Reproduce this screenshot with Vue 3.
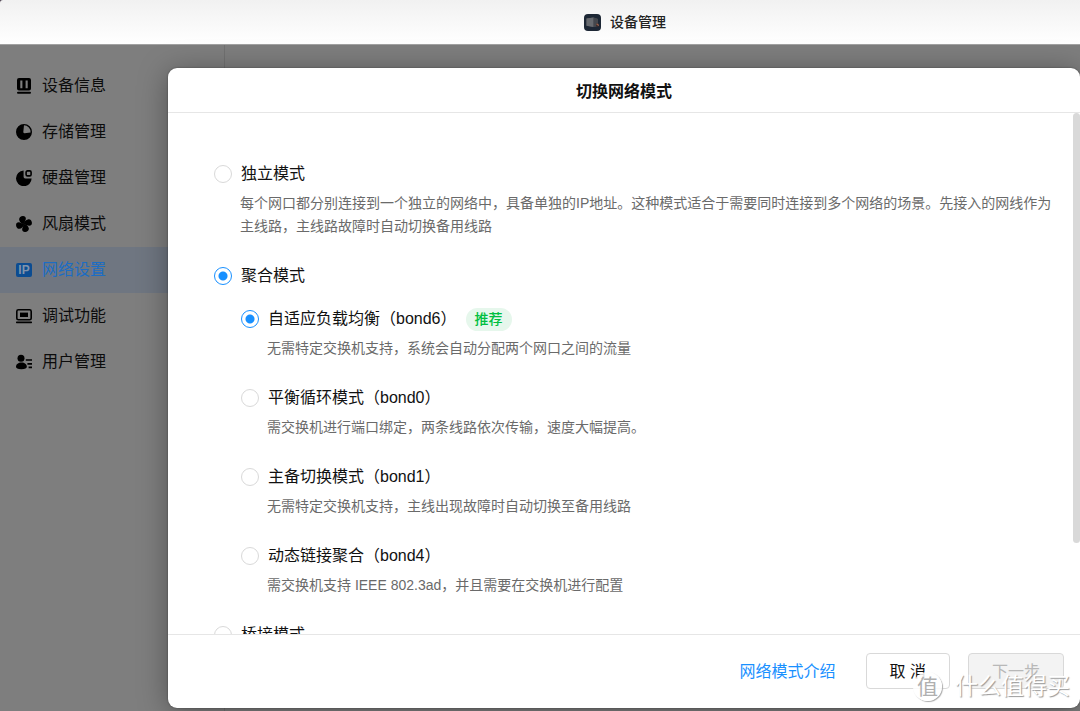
<script setup>
import { ref } from 'vue'

const menu = [
  { id: 'info', label: '设备信息' },
  { id: 'storage', label: '存储管理' },
  { id: 'disk', label: '硬盘管理' },
  { id: 'fan', label: '风扇模式' },
  { id: 'network', label: '网络设置' },
  { id: 'debug', label: '调试功能' },
  { id: 'user', label: '用户管理' }
]

const bonds = [
  { id: 'bond6', label: '自适应负载均衡（bond6）', desc: '无需特定交换机支持，系统会自动分配两个网口之间的流量', tag: '推荐' },
  { id: 'bond0', label: '平衡循环模式（bond0）', desc: '需交换机进行端口绑定，两条线路依次传输，速度大幅提高。' },
  { id: 'bond1', label: '主备切换模式（bond1）', desc: '无需特定交换机支持，主线出现故障时自动切换至备用线路' },
  { id: 'bond4', label: '动态链接聚合（bond4）', desc: '需交换机支持 IEEE 802.3ad，并且需要在交换机进行配置' }
]

const active = ref('network')
const mode = ref('aggregate')
const bond = ref('bond6')
</script>

<template>
  <div class="window">
    <header class="titlebar">
      <svg class="app-icon" viewBox="0 0 17 17" aria-hidden="true">
        <rect width="17" height="17" rx="4" fill="#1d2735" />
        <path d="M2.5 4.6 9.5 3.4 14 5v7l-4.5 1-7-1.2z" fill="#505359" />
        <path d="M2.5 4.6 9.5 3.4V13l-7-1.2z" fill="#686b70" />
        <path d="M9.5 3.4 14 5v7l-4.5 1z" fill="#44474d" />
        <rect x="12" y="9.6" width="3" height="3" rx=".6" fill="#3a2c2c" />
        <path d="M12.4 10.2h1.4v1h1.2" stroke="#c0785c" stroke-width=".8" fill="none" />
      </svg>
      <h1>设备管理</h1>
    </header>

    <div class="main">
      <nav class="sidebar">
        <button
          v-for="item in menu"
          :key="item.id"
          type="button"
          class="nav-item"
          :class="{ active: item.id === active }"
          @click="active = item.id"
        >
          <svg viewBox="0 0 16 16" aria-hidden="true">
            <template v-if="item.id === 'info'">
              <path fill-rule="evenodd" fill="currentColor" d="M3 0h10a2 2 0 0 1 2 2v8.500a2 2 0 0 1-2 2H3a2 2 0 0 1-2-2V2a2 2 0 0 1 2-2zM4.300 2.500v7.800h2.100V2.500zM9.600 2.500v7.800h2.100V2.500z" />
              <rect x="1" y="13.800" width="14" height="2" rx="1" fill="currentColor" />
            </template>
            <template v-else-if="item.id === 'storage'">
              <path fill-rule="evenodd" fill="currentColor" d="M8 0a8 8 0 1 1 0 16A8 8 0 0 1 8 0zM8 1.300 7.300 8a1.300 1.300 0 0 0 1.300 1.200l6-.7A6.700 6.700 0 0 0 8 1.300z" />
            </template>
            <template v-else-if="item.id === 'disk'">
              <path fill="currentColor" d="M7.600.6v6.200a1.600 1.600 0 0 0 1.600 1.600h6.400A7.800 7.800 0 1 1 7.600.6z" />
              <rect x="10.100" y=".9" width="5" height="5" rx="1.400" fill="none" stroke="currentColor" stroke-width="1.600" />
            </template>
            <template v-else-if="item.id === 'fan'">
              <g fill="currentColor" transform="rotate(-12 8 8)">
                <path
                  v-for="angle in [0, 90, 180, 270]"
                  :key="angle"
                  :transform="`rotate(${angle} 8 8)`"
                  d="M7.400 8C5.200 6.800 3.900 4.500 4.200 2.500 4.500.6 6.500-.3 8.500 0c2 .3 2.900 1.900 2.300 3.500C10.300 5 9 5.600 9 7.400z"
                />
              </g>
            </template>
            <template v-else-if="item.id === 'network'">
              <rect y="1" width="16" height="14" rx="2" fill="#0b4c92" />
              <text x="8" y="12" text-anchor="middle" class="ip">IP</text>
            </template>
            <template v-else-if="item.id === 'debug'">
              <rect x=".8" y="1.800" width="14.400" height="10" rx="1.600" fill="none" stroke="currentColor" stroke-width="1.600" />
              <rect x="4" y="4.600" width="8" height="4.400" fill="currentColor" />
              <rect y="13.600" width="16" height="1.600" rx=".6" fill="currentColor" />
            </template>
            <template v-else>
              <circle cx="5" cy="4.200" r="3.500" fill="currentColor" />
              <path fill="currentColor" d="M5.600 8.600c3 0 5.200 1.600 5.200 4.200 0 1.700-1.600 2.400-5.400 2.400S0 14.500 0 12.800c0-2.600 2.300-4.200 5.600-4.200z" />
              <path stroke="currentColor" stroke-width="1.700" d="M9.800 6H16M11.400 9.800H16M12.600 13.400H16" />
            </template>
          </svg>
          <span>{{ item.label }}</span>
        </button>
      </nav>
    </div>

    <section class="dialog" role="dialog" aria-labelledby="dialog-title">
      <header class="dialog-head">
        <h2 id="dialog-title">切换网络模式</h2>
      </header>

      <div class="dialog-body">
        <div class="option">
          <label class="row">
            <input v-model="mode" type="radio" name="mode" value="independent" />
            <span>独立模式</span>
          </label>
          <p>每个网口都分别连接到一个独立的网络中，具备单独的IP地址。这种模式适合于需要同时连接到多个网络的场景。先接入的网线作为主线路，主线路故障时自动切换备用线路</p>
        </div>

        <div class="option">
          <label class="row">
            <input v-model="mode" type="radio" name="mode" value="aggregate" />
            <span>聚合模式</span>
          </label>
          <div class="bonds">
            <div v-for="b in bonds" :key="b.id" class="option">
              <label class="row">
                <input v-model="bond" type="radio" name="bond" :value="b.id" />
                <span>{{ b.label }}</span>
                <em v-if="b.tag" class="tag">{{ b.tag }}</em>
              </label>
              <p>{{ b.desc }}</p>
            </div>
          </div>
        </div>

        <div class="option">
          <label class="row">
            <input v-model="mode" type="radio" name="mode" value="bridge" />
            <span>桥接模式</span>
          </label>
        </div>
        <div class="scroll-thumb"></div>
      </div>

      <footer class="dialog-foot">
        <a href="#">网络模式介绍</a>
        <div class="actions">
          <button type="button" class="btn cancel">取 消</button>
          <button type="button" class="btn next" disabled>下一步</button>
        </div>
      </footer>
    </section>

    <div class="watermark">
      <span class="seal">值</span>
      <span class="brand">什么值得买</span>
    </div>
  </div>
</template>

<style>
body {
  margin: 0;
  background: #4a3f4e;
}
</style>

<style scoped>
.window {
  position: relative;
  display: flex;
  flex-direction: column;
  height: 100vh;
  overflow: hidden;
  border-top-left-radius: 3px;
  font-family: "Liberation Sans", "Noto Sans CJK SC", sans-serif;
  font-size: 16px;
  line-height: 24px;
  color: #111;
}
button {
  font: inherit;
}
h1, h2, p {
  margin: 0;
}
.titlebar {
  display: flex;
  align-items: center;
  justify-content: center;
  gap: 9px;
  height: 44px;
  flex: none;
  padding-left: 170px;
  background: linear-gradient(#f1f1f1, #fff);
  border-bottom: 1px solid #a2a2a2;
}
.app-icon {
  width: 17px;
  height: 17px;
}
.titlebar h1 {
  font-size: 14px;
  font-weight: 500;
  color: #222;
}
.main {
  display: flex;
  flex: 1;
  background: #7e7e7e;
}
.sidebar {
  display: flex;
  flex-direction: column;
  width: 224px;
  padding-top: 18px;
  border-right: 1px solid #717171;
}
.nav-item {
  display: flex;
  align-items: center;
  gap: 10px;
  height: 46px;
  padding: 0 16px;
  border: 0;
  background: none;
  color: #0c0c0c;
  text-align: left;
}
.nav-item svg {
  width: 16px;
  height: 16px;
  color: #000;
}
.nav-item.active {
  background: #6f7681;
  color: #1c6dc4;
}
.ip {
  font-size: 12px;
  font-weight: 700;
  fill: #7f93ab;
}
.dialog {
  position: absolute;
  inset: 68px 0 3px 168px;
  display: flex;
  flex-direction: column;
  border-radius: 9px;
  background: #fff;
  overflow: hidden;
  box-shadow: 0 4px 30px rgba(0, 0, 0, 0.35), 0 0 2px rgba(0, 0, 0, 0.4);
}
.dialog-head {
  flex: none;
  padding: 12px 0 8px;
  border-bottom: 1px solid #e6e6e6;
  text-align: center;
}
.dialog-head h2 {
  font-size: 16px;
  font-weight: 700;
  color: #111;
}
.dialog-body {
  position: relative;
  flex: 1;
  min-height: 0;
  overflow: hidden;
  padding: 49px 28px 0 46px;
}
.option {
  margin-bottom: 26px;
}
.row {
  display: flex;
  align-items: center;
  gap: 9px;
  height: 24px;
}
.option p {
  margin-top: 6px;
  padding-left: 26px;
  font-size: 14px;
  line-height: 23px;
  color: #6a6a6a;
}
.bonds {
  padding: 19px 0 0 27px;
}
input[type="radio"] {
  appearance: none;
  flex: none;
  width: 18px;
  height: 18px;
  margin: 0;
  border: 1px solid #d9d9d9;
  border-radius: 50%;
  background: #fff;
}
input[type="radio"]:checked {
  border-color: #1890ff;
  background: radial-gradient(circle, #1890ff 4px, #fff 5px);
}
.tag {
  padding: 0 9px;
  border-radius: 12px;
  background: #e6f7ec;
  color: #00bf40;
  font-size: 14px;
  font-style: normal;
  font-weight: 500;
  line-height: 23px;
}
.scroll-thumb {
  position: absolute;
  top: 0;
  right: 0;
  width: 7px;
  height: 430px;
  border-radius: 4px;
  background: #d9d9d9;
}
.dialog-foot {
  display: flex;
  flex: none;
  align-items: center;
  justify-content: flex-end;
  gap: 30px;
  padding: 18px 16px 19px;
  border-top: 1px solid #e6e6e6;
}
.dialog-foot a {
  padding-top: 2px;
  color: #1890ff;
  text-decoration: none;
}
.actions {
  display: flex;
  gap: 18px;
}
.btn {
  height: 36px;
  padding: 2px 23px 0;
  border: 1px solid #d9d9d9;
  border-radius: 4px;
  background: #fff;
  color: #111;
}
.btn.next {
  background: #f3f3f3;
  color: #b8b8b8;
}
.watermark {
  position: absolute;
  right: 10px;
  bottom: 10px;
  display: flex;
  align-items: center;
  gap: 13px;
  pointer-events: none;
}
.seal {
  width: 29px;
  height: 29px;
  border-radius: 50%;
  background: rgba(255, 255, 255, 0.85);
  box-shadow: 1px 1px 1px #aaa;
  color: #b0b0b0;
  font-size: 21px;
  line-height: 29px;
  text-align: center;
}
.brand {
  color: #fff;
  font-size: 23px;
  line-height: 30px;
  text-shadow: 1px 1px 1px #999;
}
</style>
